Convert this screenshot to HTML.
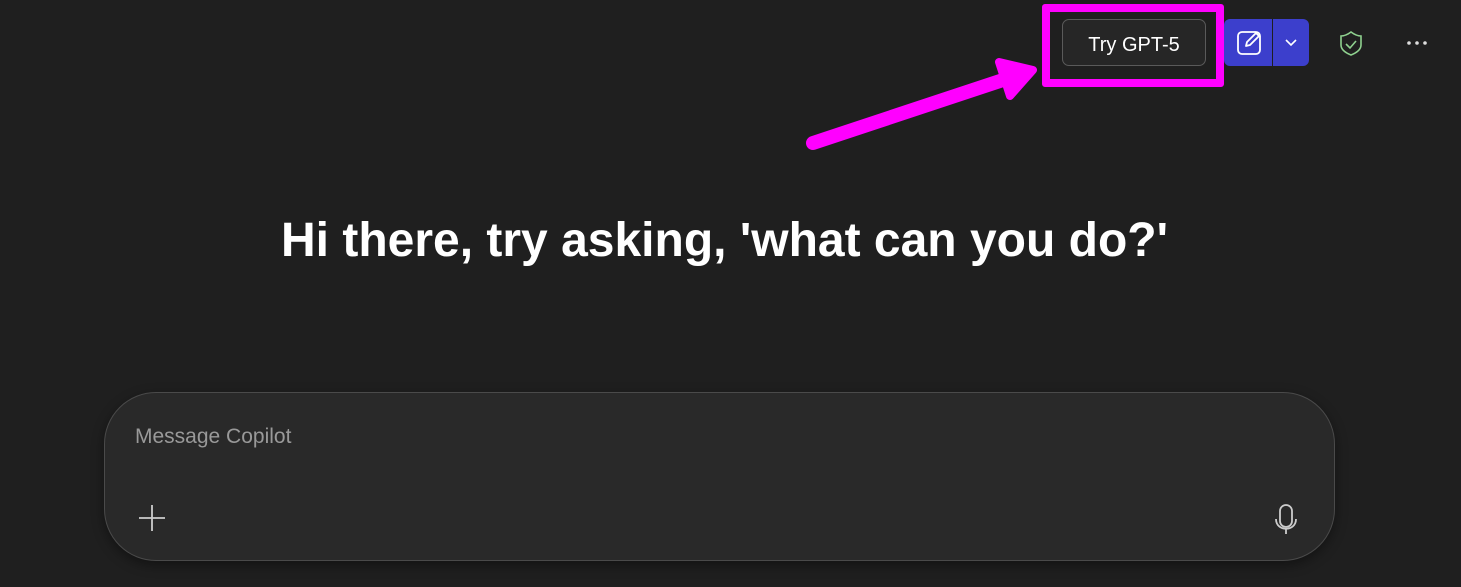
<!DOCTYPE html>
<html><head><meta charset="utf-8"><style>
html,body{margin:0;width:1461px;height:587px;background:#1f1f1f;overflow:hidden;font-family:"Segoe UI","Liberation Sans",sans-serif;position:relative}
.abs{position:absolute}
h1{position:absolute;left:0;width:1449px;top:209px;margin:0;text-align:center;color:#fff;font-weight:bold;font-size:48px;line-height:64px}
.box{left:104px;top:392px;width:1229px;height:167px;border:1px solid #4a4a4a;border-radius:52px;background:#292929;box-shadow:0 4px 12px rgba(0,0,0,.4)}
</style></head><body>
<div class="abs" style="left:1062px;top:19px;width:142px;height:45px;border:1px solid #5a5a5a;border-radius:7px;background:#262626;color:#fff;font-size:20px;line-height:50px;text-align:center">Try GPT-5</div>
<div class="abs" style="left:1042px;top:4px;width:166px;height:67px;border:8px solid #ff00ff;border-radius:3px"></div>
<div class="abs" style="left:1224px;top:19px;width:85px;height:47px;background:#3c3fcc;border-radius:6px"></div>
<div class="abs" style="left:1272px;top:19px;width:1px;height:47px;background:#1f1f1f"></div>
<svg class="abs" style="left:0;top:0" width="1461" height="587">
<rect x="1238" y="32" width="22" height="22" rx="4" fill="none" stroke="#fff" stroke-width="1.8"/>
<path d="M1246 46 L1247 42 L1256 33 L1259 36 L1250 45 Z" fill="#3c3fcc" stroke="#fff" stroke-width="1.8" stroke-linejoin="round"/>
<path d="M1286 40 L1291 45 L1296 40" fill="none" stroke="#fff" stroke-width="1.6"/>
<path d="M1351 32 C1355 35 1358 36 1361 36 L1361 45 C1361 50 1356 53 1351 55 C1346 53 1341 50 1341 45 L1341 36 C1344 36 1347 35 1351 32 Z" fill="none" stroke="#8fd18f" stroke-width="1.6"/>
<path d="M1346 44 L1350 48 L1356 41" fill="none" stroke="#8fd18f" stroke-width="1.6"/>
<circle cx="1409" cy="43" r="1.8" fill="#ddd"/><circle cx="1417" cy="43" r="1.8" fill="#ddd"/><circle cx="1425" cy="43" r="1.8" fill="#ddd"/>
<line x1="813" y1="143" x2="1003" y2="80" stroke="#ff00ff" stroke-width="14" stroke-linecap="round"/>
<path d="M999 62 L1033 70 L1010 96 Z" fill="#ff00ff" stroke="#ff00ff" stroke-width="8" stroke-linejoin="round"/>
</svg>
<h1>Hi there, try asking, 'what can you do?'</h1>
<div class="abs box"></div>
<div class="abs" style="left:135px;top:425px;color:#999;font-size:21px">Message Copilot</div>
<svg class="abs" style="left:0;top:0" width="1461" height="587">
<path d="M152 505 V531 M139 518 H165" stroke="#ccc" stroke-width="1.8"/>
<rect x="1280" y="505" width="12" height="22" rx="6" fill="none" stroke="#ccc" stroke-width="1.8"/>
<path d="M1276 519 C1276 532 1296 532 1296 519 M1286 529 V534" fill="none" stroke="#ccc" stroke-width="1.8"/>
</svg>
</body></html>
